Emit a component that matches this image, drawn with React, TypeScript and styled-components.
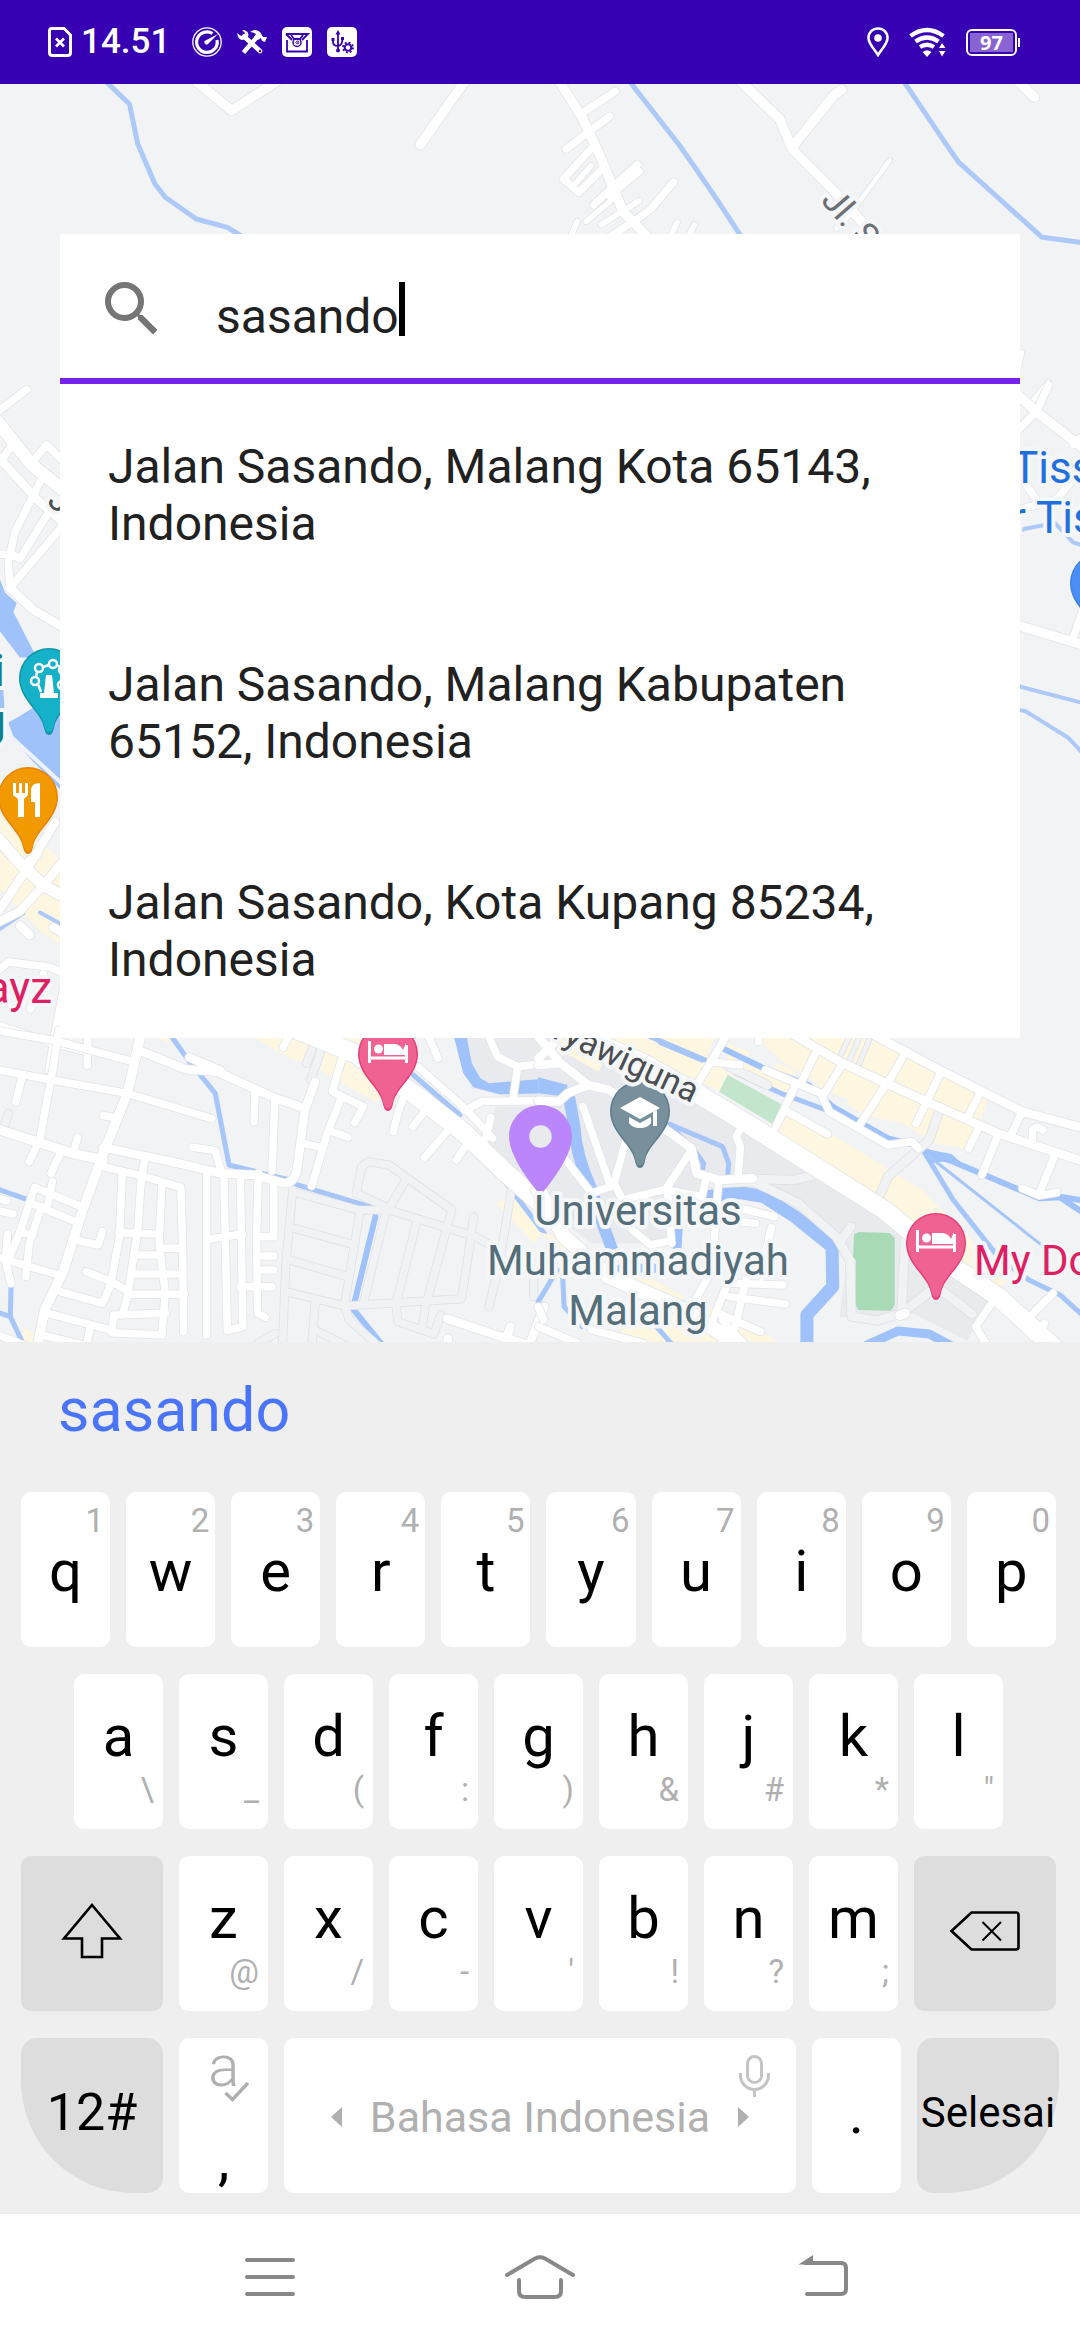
import React, { useState } from "react";
import styled, { createGlobalStyle } from "styled-components";

const GlobalStyle = createGlobalStyle`
  * { box-sizing: border-box; }
  body { margin: 0; background: #fff; font-family: Roboto, "Noto Sans", sans-serif; }
  button, input { font: inherit; color: inherit; border: 0; padding: 0; margin: 0; background: none; }
  button { cursor: pointer; }
  svg { display: block; flex: none; }
`;

const Screen = styled.div`
  display: flex;
  flex-direction: column;
  min-height: 100vh;
`;

/* ---------- status bar ---------- */

const StatusBar = styled.header`
  display: flex;
  align-items: center;
  justify-content: space-between;
  height: 84px;
  padding: 0 60px 0 48px;
  background: #3700b3;
  color: #fff;
`;

const StatusGroup = styled.div<{ $gap: number }>`
  display: flex;
  align-items: center;
  gap: ${(p) => p.$gap}px;
`;

const Clock = styled.time`
  padding: 0 20px 0 7px;
  font-size: 35px;
  font-weight: 500;
  line-height: 42px;
`;

const Battery = styled.div`
  display: flex;
  align-items: center;
`;

const BatteryBody = styled.div`
  width: 51px;
  height: 27px;
  padding: 2px;
  border: 2px solid #fff;
  border-radius: 6px;
`;

const BatteryLevel = styled.div`
  height: 19px;
  background: #8a63d2;
  font-family: "Noto Sans", sans-serif;
  font-size: 20px;
  font-weight: 700;
  line-height: 19px;
  text-align: center;
`;

const BatteryTip = styled.div`
  width: 2px;
  height: 9px;
  margin-left: 1px;
  background: #fff;
`;

/* ---------- map ---------- */

const MapArea = styled.main`
  position: relative;
  flex: 1;
  padding: 150px 60px 304px;
  background: #f1f3f4;
  overflow: hidden;
`;

const MapCanvas = styled.svg`
  position: absolute;
  inset: 0;
  width: 100%;
  height: 100%;
`;

const Line = styled.path`
  fill: none;
  stroke-linecap: round;
  stroke-linejoin: round;
  vector-effect: non-scaling-stroke;
`;

const MapLabel = styled.text`
  font-family: Roboto, sans-serif;
  paint-order: stroke;
  stroke: #f4f6f8;
  stroke-width: 8px;
  stroke-linejoin: round;
`;

type RoadSpec = [width: number, d: string];

function Roads({ list, fill = "#fff", edge = "#e1e3e7" }: { list: RoadSpec[]; fill?: string; edge?: string }) {
  return (
    <>
      {list.map(([w, d], i) => (
        <Line key={"e" + i} d={d} stroke={edge} strokeWidth={w + 2} />
      ))}
      {list.map(([w, d], i) => (
        <Line key={"f" + i} d={d} stroke={fill} strokeWidth={w + 0.5} />
      ))}
    </>
  );
}

const MINOR = { fill: "#f0f2f4", edge: "#dfe1e5" };

function NorthTile() {
  return (
    <g transform="translate(0 84) scale(.6888 .3333)">
      <Line stroke="#adc9f7" strokeWidth={5} d="M155-5L188 60L200 180L225 300L240 340L285 405L330 430L370 480M915-5L985 180Q1030 310 1080 470M1313-5L1370 170L1392 235L1513 460L1580 478" />
      <Roads
        list={[
          [9, "M285-8L336 80L402-8M675-8L610 182M1075-8L1132 105L1150 195L1215 330L1280 480M1222 17L1210 35L1150 190M1478-8L1502 40"],
          [9, "M812-8L845 100L870 210L890 310L905 385L950 480"],
          [7, "M893 22L843 90M885 97L822 195M860 190L818 285L840 325L872 260M925 242L862 362M928 262L885 335M978 294L945 375L925 405L870 480"],
          [5, "M858 245L835 300M928 350L873 422M890 345L851 412M838 412L824 480M983 415L968 480M1008 422L994 480M1240 375L1215 432M1483 805L1478 850M1522 895L1500 950"],
          [4, "M1292 228L1240 375"],
        ]}
      />
    </g>
  );
}

function WestTile() {
  return (
    <g transform="translate(0 380) scale(.3333 .4337)">
      <path fill="#9fc2fb" d="M-5 450L15 490L50 515L40 535L110 640L60 640L-5 575ZM25 790L60 775L100 755L200 760V960L100 880L30 820ZM-5 705L10 715L14 770L-5 775Z" />
      <path fill="#fdf6e0" d="M-5 985L75 1060L110 1065L155 1085L200 1130V1310L120 1270L50 1215L-5 1170Z" />
      <Line stroke="#eef3fd" strokeWidth={4} d="M18 790L36 825L100 870L200 940" />
      <Line stroke="#adc9f7" strokeWidth={4} d="M-5 1268L70 1230M120 1228L200 1262" />
      <Roads
        list={[
          [7, "M-5 72L80 22M35 150L8 182M95 190L140 150L200 195M125 228L100 265L45 350L25 420L30 480M150 300L60 412L35 402L-5 402M200 325L40 470"],
          [12, "M-8 95L95 195L200 260"],
          [8, "M-8 175L110 275L200 335M28 478L100 530L200 575"],
          [11, "M-8 1055L60 1115L130 1165L200 1195"],
          [8, "M165 1020L95 1110L-5 1225M200 1100L130 1165L60 1225L-5 1250M60 1258L90 1280M112 1095L85 1110M160 1262L200 1280"],
          [7, "M-5 1362L25 1342L150 1354L200 1370M130 1370L118 1408L92 1450M-5 1488L165 1530L270 1550M262 1500V1580"],
          [9, "M200 1380L170 1500L150 1590"],
        ]}
      />
    </g>
  );
}

function EastTile() {
  return (
    <g transform="translate(960 380) scale(.3333 .4337)">
      <Roads
        list={[
          [7, "M265 12L230 72L175 115M340 148L370 128M175 215L235 282M175 300L290 275L330 238M335 605L370 528"],
          [9, "M170 32L240 80L375 160M170 565L335 603L375 612"],
        ]}
      />
      <Line stroke="#adc9f7" strokeWidth={4} d="M175 350L195 343L285 330L340 375L370 382M170 705L370 745M170 760L195 763L325 825L370 862" />
    </g>
  );
}

function SouthWestTile() {
  return (
    <g transform="translate(0 1030) scale(.3444 .3333)">
      <path fill="#e8eaed" d="M1350 0H1580V210H1400L1350 240L1300 170ZM1400 325L1440 230H1580V520Z" />
      <path fill="#f1f3f4" d="M1320 0L1370 175L1470 200L1350 240L1200 130L1220 20Z" />
      <path fill="#fdf6e0" d="M735 20L910 20L885 95L850 88L800 60ZM945 55L1000 85L1130 190L1090 215L1000 165L930 120ZM990 20H1060L1040 50ZM450 20L500 20L485 38ZM1440 520L1500 490L1580 600L1550 640ZM70 895L150 930L60 940Z" />
      <path fill="#9fc2fb" d="M1318 20H1355L1370 100L1395 145L1420 160L1580 146V190L1450 193L1375 172L1345 130Z" />
      <Line stroke="#a6c5f9" strokeWidth={5} d="M495 15L550 95L625 190L665 405L840 450M850 460L1080 532M-5 478L72 506M32 770L30 860L-5 848M30 860L62 930M1200 135L1335 255M1390 380L1470 460L1580 610" />
      <Line stroke="#9fc2fb" strokeWidth={6} d="M1090 560L1030 815M1026 838L1110 945" />
      <Roads
        {...MINOR}
        list={[
          [7, "M850 480L830 700L820 950M850 485L1040 540L1130 540L1380 620L1415 640M855 595L1030 645M840 690L1010 740M830 785L1000 828"],
          [7, "M1045 545L1000 828L1340 806L1362 660L1375 560M1122 540L1055 820M1035 490L1050 410L1070 395L1130 405L1312 540L1235 830L1225 900M1035 490L1130 535L1178 450M1210 575L1150 820L1155 875L1260 912L1280 855"],
          [7, "M1485 480L1450 700L1420 830M915 820L905 950M915 900L1010 950M1000 828L1015 870L1100 950M750 940L800 910M940 40L902 150M915 30L890 100M25 250L12 290M1550 700V800"],
        ]}
      />
      <Roads
        list={[
          [7, "M-5 2L160 32L260 60L375 92M170 0L155 110L115 330L85 395M255 20V55M-5 120L150 150L370 190L615 266M62 150L46 215M225 322L213 370M175 370L148 430M300 257L340 264"],
          [9, "M412 0L370 190L300 370L240 540L185 720L130 840L108 950M-5 298L120 340L210 370L300 390"],
          [8, "M400 60L540 118L630 125L800 205L885 235M550 82L640 122M915 155L885 240L865 400Q860 460 825 460L740 435L640 430L520 400L300 352"],
          [7, "M740 190L738 275M798 210L790 422M560 352L625 362L642 425M880 340L930 352M1000 60L965 185L1055 230L1030 278M990 205L950 310L905 468M960 303L1010 322"],
          [7, "M1180 180L1155 250L1142 305M1240 235L1198 290M1310 290L1233 382M1360 335L1325 390M1425 262L1410 325M1350 242L1400 214L1580 212M1490 205L1503 110L1580 100M1503 110L1445 80L1415 10M1272 85L1240 10M822 52L840 15"],
          [7, "M300 410L420 440L525 472L530 640L533 905M420 390L410 450L400 600L370 800L355 855M355 430L347 620L320 770M470 465L462 640L480 790L470 915L325 908L330 855L480 850"],
          [7, "M345 608L462 612M400 675H460M470 655H530M395 732H530M370 793H535M600 430V915M650 430L660 902L705 890L698 440M605 628L705 612M750 430L745 620L748 850L770 862"],
          [7, "M795 460V620H755M755 678H795M755 720H795M698 770H790M100 472L240 532M90 520L230 580M152 455L140 520M100 472L60 600L20 700M120 530L85 640L75 740M60 608L95 614"],
          [7, "M-5 682L170 735M22 612L15 690L32 760M-5 542L38 552M-5 505L20 512M220 630L285 645L297 605M250 725L325 755L375 785M325 755L298 820L175 785M140 850L320 900M260 900L250 950M120 915L260 950M-5 915L80 950"],
          [8, "M1298 866L1440 915L1580 960M1482 890L1472 920M1580 830L1535 950M1300 925V960"],
          [7, "M1213 110L1350 235L1430 325"],
          [18, "M840-10L1030 70L1200 190L1350 310L1470 430L1580 530"],
        ]}
      />
    </g>
  );
}

function SouthEastTile() {
  return (
    <g transform="translate(540 1030) scale(.3444 .3333)">
      <path fill="#e8eaed" d="M-5 10L50 20L300 100L440 200L1060 590L1320 800L1240 932L1080 850L1040 870L870 860L890 700L830 620L700 500L560 470L450 500L380 640L150 640L-5 520Z" />
      <path fill="#fdf6e0" d="M60 15L50 55L170 125L190 90ZM110 10H510L460 150L300 90ZM500 90L545 130L520 185L470 155ZM545 40L740 120L720 200L600 150L545 130ZM600 0L990 30L1300 210L1250 360L1150 340L1050 280L940 255L830 180L700 90ZM710 225L1110 480L1260 640L1270 720L1060 590L690 300ZM-5 605L50 620L130 720L330 750L420 800L380 850L180 750ZM200 820L380 850L520 830L690 935H250ZM1230 700L1360 750L1330 780Z" />
      <path fill="#f1f3f4" d="M610 60L690 90L680 120L600 100ZM750 150L900 210L850 240L760 190Z" />
      <path fill="#c3e5cb" d="M545 135L705 225L680 285L520 185Z" />
      <circle fill="#ceead6" cx="115" cy="555" r="22" />
      <path fill="#9fc2fb" d="M-5 142L80 165L75 200L-5 190Z" />
      <Line stroke="#9fc2fb" strokeWidth={12} strokeLinecap="butt" d="M85 205L100 290Q105 380 150 480L185 590L210 660" />
      <Line stroke="#9fc2fb" strokeWidth={13} d="M455 505L580 488L650 500L740 560L848 650L850 770L775 855L775 950" />
      <Line stroke="#9fc2fb" strokeWidth={9} d="M402 580L398 655M235 715H380M950 945L1040 903L1130 912L1190 945" />
      <Line stroke="#a6c5f9" strokeWidth={5} d="M320 20L480 90M350 38L470 90M570 130L700 190L830 240M375 282L530 350L548 400L545 440M378 290L440 350L475 400L470 430M65 720L70 830L122 890M-5 815L50 720M325 875L385 945M1115 365L1200 510L1330 680L1420 750L1510 795L1580 860" />
      <Line stroke="#9fc2fb" strokeWidth={6} d="M530 55L650 115L780 165L850 230L920 272L1010 325L1110 350M1115 362L1200 395L1450 505L1510 502L1580 550M1510 500L1580 512" />
      <path fill="#9fc2fb" d="M1110 355L1195 372L1230 405L1170 395L1130 400Z" />
      <Line stroke="#a6c5f9" strokeWidth={3} d="M1125 375L1450 640L1520 670" />
      <Roads
        {...MINOR}
        list={[
          [8, "M500 460L620 455L750 520L860 620L900 690L905 860L980 872L1050 850L1150 770L1255 852M903 590L875 630M1060 630L1050 850M620 447L740 450L830 425M1160 240L1130 330L1010 440L985 500M550 110L660 165"],
          [4, "M905 10L865 90M930 15L895 100M960 20L925 105"],
        ]}
      />
      <path fill="#a8dab5" d="M925 606L1015 609L1030 625V825L1018 842L925 840L917 825V690L909 680L912 612Z" />
      <Roads
        list={[
          [8, "M720 5L880 100L1090 200L1330 310L1580 395M970 15L1160 120L1400 245L1580 295"],
          [7, "M545 10L500 90L455 165M800 70L760 155M880 100L820 200M655 120L815 190L840 245L1010 345L1080 335L1100 355M1060 70L1015 150M1165 125L1125 210L1092 280M1010 155L928 285M1280 185L1245 255M1400 245L1370 310"],
          [7, "M1275 290L1245 355M1330 315L1283 435M1495 375L1450 490M1400 475L1450 497L1500 488M1430 330V300Q1440 283 1460 300M740 170L685 290M712 242L835 312M495 95L580 105M635 20V35"],
          [8, "M-5 212L55 215L80 190L140 165L200 180L300 250L440 355L455 430L520 450L618 445M-5 20L60 100L140 165M-5 105L60 100M-5 85L40 40"],
          [7, "M125 230L205 470L150 490L60 370M250 330L215 460L240 510L365 478L440 360M585 290L570 320L582 350L575 440M520 450L515 500L500 720L440 830M480 455L470 500L370 480L382 640M268 600L320 645L365 635"],
          [7, "M560 530L680 560M550 572L625 580M672 592L640 740M560 760L705 765M550 800L712 822M545 760L490 900M600 740L565 900L520 950M520 850L640 905M530 870L600 950M-5 830L10 870M-5 890L110 940M150 900L300 940"],
          [7, "M1325 800L1265 890L1300 950M1490 790L1420 862M1465 880L1430 920"],
          [9, "M1060 850L1045 856"],
          [14, "M-5 480L70 620L200 740L400 830L580 945"],
          [18, "M60-10L300 100L440 180L600 280L800 410L1000 540L1200 710L1330 800L1500 960"],
        ]}
      />
    </g>
  );
}

const PIN_SHAPE = "M0 87C-3 87-4 84-5 80C-8 63-30 52-30 30A30 30 0 0 1 30 30C30 52 8 63 5 80C4 84 3 87 0 87Z";

function Pin({ x, y, fill, edge, children }: { x: number; y: number; fill: string; edge: string; children?: React.ReactNode }) {
  return (
    <g transform={`translate(${x} ${y})`}>
      <path d={PIN_SHAPE} fill={edge} />
      <path d={PIN_SHAPE} fill={fill} transform="translate(0 1.5) scale(.95)" />
      {children}
    </g>
  );
}

const Bed = () => (
  <g>
    <path d="M-18.500 17V39M18.500 21V39M-18.500 34H18.500" stroke="#fff" strokeWidth="3" />
    <circle cx="-9.500" cy="25" r="4.500" fill="#fff" />
    <path d="M-4 20H7Q13 21 15 26L18 19V31H-4Z" fill="#fff" />
  </g>
);

function Pins() {
  return (
    <>
      <Pin x={49} y={648} fill="#14b1c8" edge="#1097a8">
        <path d="M-3 27H3L5 45H9V50H-9V45H-5Z" fill="#fff" />
        <g fill="none" stroke="#fff" strokeWidth="2.500">
          <circle cx="-14" cy="33" r="4" />
          <circle cx="-10" cy="20" r="4" />
          <circle cx="4" cy="16" r="4" />
          <circle cx="14" cy="22" r="4" />
          <circle cx="13" cy="37" r="4" />
          <path d="M-13 29L-12 24M-6 19L0 17M-11 36L-8 44M8 17L11 19" />
        </g>
      </Pin>
      <Pin x={28} y={767} fill="#f29900" edge="#e8830c">
        <path d="M-15 16H-12V26H-9V16H-6V26H-3V16H0V28L-4 32V50H-10V32L-15 28ZM12 16V50H7V35H3V22Q4 16 12 16Z" fill="#fff" />
      </Pin>
      <Pin x={388} y={1024} fill="#f06292" edge="#e5407a"><Bed /></Pin>
      <Pin x={936} y={1213} fill="#f06292" edge="#e5407a"><Bed /></Pin>
      <Pin x={1100} y={553} fill="#4a8df5" edge="#4081e8" />
      <Pin x={640} y={1081} fill="#78909c" edge="#5f7c8a">
        <path d="M0 16L20 27L0 38L-20 27ZM13 31L17 29V45H13ZM-11 36L0 42L11 36V42Q8 47 0 47Q-8 47-11 42Z" fill="#fff" />
      </Pin>
      <path
        transform="translate(486.500 1096) scale(4.500)"
        fill="#bb86fc"
        d="M12 2C8.130 2 5 5.130 5 9c0 5.250 7 13 7 13s7-7.750 7-13c0-3.870-3.130-7-7-7zm0 9.500a2.500 2.500 0 0 1 0-5 2.500 2.500 0 0 1 0 5z"
      />
    </>
  );
}

function Labels() {
  return (
    <>
      <MapLabel x="820" y="201" fontSize="35" fill="#6b7075" transform="rotate(49 820 201)">Jl. S</MapLabel>
      <MapLabel x="46" y="504" fontSize="34" fill="#4a4d51" transform="rotate(35 46 504)">J</MapLabel>
      <MapLabel x="692" y="1103" fontSize="34" fill="#4a4d51" textAnchor="end" transform="rotate(25 692 1103)">ryawiguna</MapLabel>
      <MapLabel x="5" y="686" fontSize="44" fill="#12808c" textAnchor="end">i</MapLabel>
      <MapLabel x="6" y="736" fontSize="44" fill="#12808c" textAnchor="end">g</MapLabel>
      <MapLabel x="52" y="1003" fontSize="44" fill="#e01e62" textAnchor="end">ayz</MapLabel>
      <MapLabel x="1012" y="483" fontSize="44" fill="#1f6fdf">Tiss</MapLabel>
      <MapLabel x="1011" y="533" fontSize="44" fill="#1f6fdf">r Tis</MapLabel>
      <MapLabel x="974" y="1275" fontSize="42" fill="#e01e62">My Do</MapLabel>
      <MapLabel x="638" y="1225" fontSize="42" fill="#546e7a" textAnchor="middle">Universitas</MapLabel>
      <MapLabel x="638" y="1275" fontSize="42" fill="#546e7a" textAnchor="middle">Muhammadiyah</MapLabel>
      <MapLabel x="638" y="1325" fontSize="42" fill="#546e7a" textAnchor="middle">Malang</MapLabel>
    </>
  );
}

/* ---------- search ---------- */

const SearchPanel = styled.section`
  position: relative;
  background: #fff;
`;

const SearchField = styled.label`
  display: flex;
  align-items: center;
  height: 150px;
  padding: 0 36px;
  box-shadow: inset 0 -6px 0 #7522ec;
`;

const SearchInput = styled.input`
  field-sizing: content;
  min-width: 20px;
  height: 70px;
  margin-left: 48px;
  padding-top: 14px;
  outline: none;
  color: #212121;
  font-size: 48px;
  line-height: 56px;
`;

const Caret = styled.span`
  width: 6px;
  height: 54px;
  background: #000;
`;

const Results = styled.ul`
  margin: 0;
  padding: 0;
  list-style: none;
`;

const ResultButton = styled.button`
  display: block;
  width: 100%;
  height: 218px;
  padding: 4px 48px 0;
  color: #212121;
  font-size: 48px;
  line-height: 57px;
  text-align: left;
`;

/* ---------- keyboard ---------- */

const Keyboard = styled.section`
  background: #efefef;
  padding-bottom: 21px;
`;

const SuggestionBar = styled.div`
  height: 150px;
  padding: 32px 58px 0;
`;

const Suggestion = styled.button`
  color: #4a74fb;
  font-size: 61px;
  line-height: 72px;
`;

const KeyRows = styled.div`
  display: flex;
  flex-direction: column;
  gap: 27px;
`;

const KeyRow = styled.div<{ $left?: number; $right?: number }>`
  display: flex;
  gap: 16px;
  padding: 0 ${(p) => p.$right ?? 24}px 0 ${(p) => p.$left ?? 21}px;
`;

const Key = styled.button<{ $grow?: number; $tone?: string; $corner?: string }>`
  display: flex;
  flex: ${(p) => p.$grow ?? 89} 1 0;
  flex-direction: column;
  align-items: center;
  justify-content: center;
  min-width: 0;
  height: 155px;
  border-radius: ${(p) => p.$corner ?? "10px"};
  background: ${(p) => p.$tone ?? "#fff"};
  color: #000;
`;

const IconKey = styled(Key)`
  padding-bottom: 6px;
`;

const LetterKey = styled(Key)<{ $hintBelow?: boolean }>`
  flex-direction: ${(p) => (p.$hintBelow ? "column-reverse" : "column")};
  justify-content: ${(p) => (p.$hintBelow ? "flex-end" : "flex-start")};
  gap: ${(p) => (p.$hintBelow ? 4 : 0)}px;
  padding-top: ${(p) => (p.$hintBelow ? 30 : 11)}px;
`;

const Letter = styled.span`
  font-size: 58px;
  line-height: 64px;
`;

const Hint = styled.span<{ $inset: number }>`
  align-self: flex-end;
  padding-right: ${(p) => p.$inset}px;
  color: #b0b0b0;
  font-size: 33px;
  line-height: 36px;
`;

const KeyLabel = styled.span<{ $size: number }>`
  padding-bottom: 5px;
  font-size: ${(p) => p.$size}px;
  line-height: 60px;
  white-space: nowrap;
`;

const CommaKey = styled(Key)`
  justify-content: space-between;
  padding: 0 0 2px;
`;

const SpellMark = styled.span`
  position: relative;
  color: #b0b0b0;
  font-size: 58px;
  font-weight: 300;
  line-height: 56px;

  svg { position: absolute; left: 16px; top: 43px; }
`;

const SpaceKey = styled(Key)`
  position: relative;
  flex-direction: row;
  gap: 28px;
  padding-top: 3px;
  color: #b0b0b0;
  font-size: 43px;
`;

const MicSlot = styled.span`
  position: absolute;
  top: 17px;
  right: 26px;
`;

const PeriodLabel = styled(Letter)`
  padding-bottom: 6px;
`;

/* ---------- navigation ---------- */

const NavBar = styled.nav`
  display: grid;
  grid-template-columns: repeat(3, 1fr);
  height: 126px;
  padding: 0 12.5%;
  background: #fff;
`;

const NavButton = styled.button`
  display: flex;
  align-items: center;
  justify-content: center;
`;

const GREY_KEY = "#dddddd";
const TOP_ROW = ["q1", "w2", "e3", "r4", "t5", "y6", "u7", "i8", "o9", "p0"];
const HOME_ROW = ["a\\", "s_", "d(", "f:", "g)", "h&", "j#", "k*", 'l"'];
const LOWER_ROW = ["z@", "x/", "c-", "v'", "b!", "n?", "m;"];

const PLACES = [
  "Jalan Sasando, Malang Kota 65143, Indonesia",
  "Jalan Sasando, Malang Kabupaten 65152, Indonesia",
  "Jalan Sasando, Kota Kupang 85234, Indonesia",
];

function LetterKeys({ keys, below }: { keys: string[]; below?: boolean }) {
  return (
    <>
      {keys.map((k) => (
        <LetterKey key={k} $hintBelow={below}>
          <Hint $inset={below ? 9 : 6}>{k[1]}</Hint>
          <Letter>{k[0]}</Letter>
        </LetterKey>
      ))}
    </>
  );
}

function StatusIcons() {
  return (
    <StatusGroup $gap={15}>
      <svg width="30" height="30" viewBox="0 0 30 30" fill="none">
        <circle cx="15" cy="15" r="14.200" stroke="#fff" strokeWidth="1.300" />
        <path d="M20.500 6.500A10.300 10.300 0 1 0 25 13" stroke="#fff" strokeWidth="3.200" />
        <path d="M26 7L15.500 17.500A2.600 2.600 0 0 1 12.500 14Z" fill="#fff" />
      </svg>
      <svg width="30" height="30" viewBox="0 0 30 30" fill="none">
        <path d="M7 9.500L23 24" stroke="#fff" strokeWidth="4.500" strokeLinecap="round" />
        <path d="M6.500 25.500L20 10" stroke="#fff" strokeWidth="4.500" />
        <path d="M5 3L8 6L6.500 9L3 8.500L.500 6Q0 11 4.500 13L10 12L11.500 8Q11 3 5 3ZM13 5Q18 1 23 5L26 10L30 10L28 15L25 14L24 11L21 13L17 10L19 7Q16 5 13 5Z" fill="#fff" />
        <circle cx="23" cy="24" r="1.200" fill="#3700b3" />
      </svg>
      <svg width="30" height="30" viewBox="0 0 30 30" fill="none">
        <rect width="30" height="30" rx="5" fill="#fff" />
        <path d="M5 13V24.500H25V13M4 7H26L20 13M4 7L10 13M9 8L12 12H18L21 8" stroke="#3700b3" strokeWidth="1.800" />
        <circle cx="15" cy="15.500" r="4" stroke="#3700b3" strokeWidth="1.500" />
        <path d="M17 14.500Q15 12.800 13.800 15.500Q15 18 16.800 16H15" stroke="#3700b3" />
      </svg>
      <svg width="30" height="30" viewBox="0 0 30 30" fill="none">
        <rect width="30" height="30" rx="5" fill="#fff" />
        <path d="M11 6V24M6 12V15Q6 19 11 19Q15.500 18 15.500 12" stroke="#3700b3" strokeWidth="1.800" />
        <path d="M11 3L13.500 7.500H8.500ZM4.500 11H7.500V14H4.500ZM14 10H17V13H14Z" fill="#3700b3" />
        <circle cx="11" cy="23.500" r="2" fill="#3700b3" />
        <circle cx="21" cy="20.500" r="3.300" stroke="#3700b3" strokeWidth="2" />
        <circle cx="21" cy="20.500" r="5" stroke="#3700b3" strokeWidth="1.800" strokeDasharray="1.960" />
      </svg>
    </StatusGroup>
  );
}

export default function App() {
  const [query, setQuery] = useState("sasando");

  return (
    <Screen>
      <GlobalStyle />
      <StatusBar>
        <StatusGroup $gap={2}>
          <svg width="24" height="30" viewBox="0 0 24 30" fill="none" stroke="#fff">
            <path d="M4 1.500H16L22.500 8V25.500Q22.500 28.500 19.500 28.500H4.500Q1.500 28.500 1.500 25.500V4Q1.500 1.500 4 1.500Z" strokeWidth="3" />
            <path d="M8 11.500L16 19.500M16 11.500L8 19.500" strokeWidth="2.600" />
          </svg>
          <Clock>14.51</Clock>
          <StatusIcons />
        </StatusGroup>
        <StatusGroup $gap={20}>
          <svg width="22" height="30" viewBox="0 0 22 30">
            <path d="M11 1.500C5.500 1.500 1.500 5.500 1.500 11C1.500 17 8 23 11 28C14 23 20.500 17 20.500 11C20.500 5.500 16.500 1.500 11 1.500Z" fill="none" stroke="#fff" strokeWidth="2.600" />
            <circle cx="11" cy="11" r="3.800" fill="#fff" />
          </svg>
          <svg width="37" height="30" viewBox="0 0 37 30" fill="none" stroke="#fff">
            <path d="M1.500 9Q18 -3 34.500 9M6.500 14.500Q18 6.500 29.500 14.500M11 20Q18 15.500 25 20" strokeWidth="4.200" />
            <path d="M13.500 25Q18 21.500 22.500 25L18 30ZM30 21L33 16L36.500 21ZM30 24L33 29.500L36.500 24Z" fill="#fff" stroke="none" />
          </svg>
          <Battery>
            <BatteryBody>
              <BatteryLevel>97</BatteryLevel>
            </BatteryBody>
            <BatteryTip />
          </Battery>
        </StatusGroup>
      </StatusBar>

      <MapArea>
        <MapCanvas viewBox="0 84 1080 1258" preserveAspectRatio="xMidYMin slice" aria-hidden="true">
          <NorthTile />
          <WestTile />
          <EastTile />
          <SouthWestTile />
          <SouthEastTile />
          <Pins />
          <Labels />
        </MapCanvas>
        <SearchPanel>
          <SearchField>
            <svg width="72" height="72" viewBox="0 0 24 24" fill="#757575">
              <path d="M15.500 14h-.790l-.280-.270A6.471 6.471 0 0 0 16 9.500 6.500 6.500 0 1 0 9.500 16c1.610 0 3.090-.590 4.230-1.570l.270.280v.790l5 4.990L20.490 19l-4.990-5zm-6 0C7.010 14 5 11.990 5 9.500S7.010 5 9.500 5 14 7.010 14 9.500 11.990 14 9.500 14z" />
            </svg>
            <SearchInput aria-label="Search" value={query} onChange={(e) => setQuery(e.target.value)} />
            <Caret />
          </SearchField>
          <Results>
            {PLACES.map((place) => (
              <li key={place}>
                <ResultButton>{place}</ResultButton>
              </li>
            ))}
          </Results>
        </SearchPanel>
      </MapArea>

      <Keyboard>
        <SuggestionBar>
          <Suggestion>sasando</Suggestion>
        </SuggestionBar>
        <KeyRows>
          <KeyRow>
            <LetterKeys keys={TOP_ROW} />
          </KeyRow>
          <KeyRow $left={74} $right={77}>
            <LetterKeys keys={HOME_ROW} below />
          </KeyRow>
          <KeyRow>
            <IconKey $grow={142} $tone={GREY_KEY} aria-label="Shift">
              <svg width="62" height="56" viewBox="0 0 62 56" fill="none" stroke="#000" strokeWidth="2.600">
                <path d="M31 2L59 35.500H41V54H21V35.500H3Z" />
              </svg>
            </IconKey>
            <LetterKeys keys={LOWER_ROW} below />
            <IconKey $grow={142} $tone={GREY_KEY} aria-label="Backspace">
              <svg width="70" height="40" viewBox="0 0 70 40" fill="none" stroke="#000" strokeWidth="2.600">
                <path d="M1.500 20L21.500 1.500H66Q68.500 1.500 68.500 4V36Q68.500 38.500 66 38.500H21.500Z" />
                <path d="M32.500 11L51 29.500M51 11L32.500 29.500" strokeWidth="2" />
              </svg>
            </IconKey>
          </KeyRow>
          <KeyRow $right={21}>
            <Key $grow={142} $tone={GREY_KEY} $corner="16px 16px 16px 112px">
              <KeyLabel $size={52}>12#</KeyLabel>
            </Key>
            <CommaKey>
              <SpellMark>
                a
                <svg width="26" height="22" viewBox="0 0 26 22" fill="none" stroke="#b0b0b0" strokeWidth="3.500">
                  <path d="M1.500 12L8.500 18.500L24 2" />
                </svg>
              </SpellMark>
              <Letter>,</Letter>
            </CommaKey>
            <SpaceKey $grow={511}>
              <svg width="11" height="20" viewBox="0 0 11 20" fill="#b0b0b0">
                <path d="M11 0V20L0 10Z" />
              </svg>
              <span>Bahasa Indonesia</span>
              <svg width="11" height="20" viewBox="0 0 11 20" fill="#b0b0b0">
                <path d="M0 0V20L11 10Z" />
              </svg>
              <MicSlot>
                <svg width="31" height="42" viewBox="0 0 31 42" fill="none" stroke="#c4c4c4" strokeWidth="3">
                  <rect x="8.500" y="1.500" width="14" height="26" rx="7" />
                  <path d="M1.500 18V20.500A14 14 0 0 0 29.500 20.500V18M15.500 34V42" />
                </svg>
              </MicSlot>
            </SpaceKey>
            <Key>
              <PeriodLabel>.</PeriodLabel>
            </Key>
            <Key $grow={142} $tone={GREY_KEY} $corner="16px 16px 112px 16px">
              <KeyLabel $size={42}>Selesai</KeyLabel>
            </Key>
          </KeyRow>
        </KeyRows>
      </Keyboard>

      <NavBar>
        <NavButton aria-label="Recent apps">
          <svg width="50" height="40" viewBox="0 0 50 40" stroke="#888" strokeWidth="4" strokeLinecap="round">
            <path d="M2 3H48M2 20H48M2 37H48" />
          </svg>
        </NavButton>
        <NavButton aria-label="Home">
          <svg width="70" height="44" viewBox="0 0 70 44" fill="none" stroke="#888" strokeWidth="4" strokeLinecap="round">
            <path d="M2 20L30 3.500Q35 1 40 3.500L68 20M14 25V36Q14 42 20 42H50Q56 42 56 36V25" />
          </svg>
        </NavButton>
        <NavButton aria-label="Back">
          <svg width="78" height="44" viewBox="0 0 78 44" fill="none" stroke="#888" strokeWidth="4" strokeLinecap="round">
            <path d="M34 8H70Q75 8 75 13V34Q75 39 70 39H36" />
            <path d="M42 0V9.500H27.500Z" fill="#888" stroke="none" />
          </svg>
        </NavButton>
      </NavBar>
    </Screen>
  );
}
